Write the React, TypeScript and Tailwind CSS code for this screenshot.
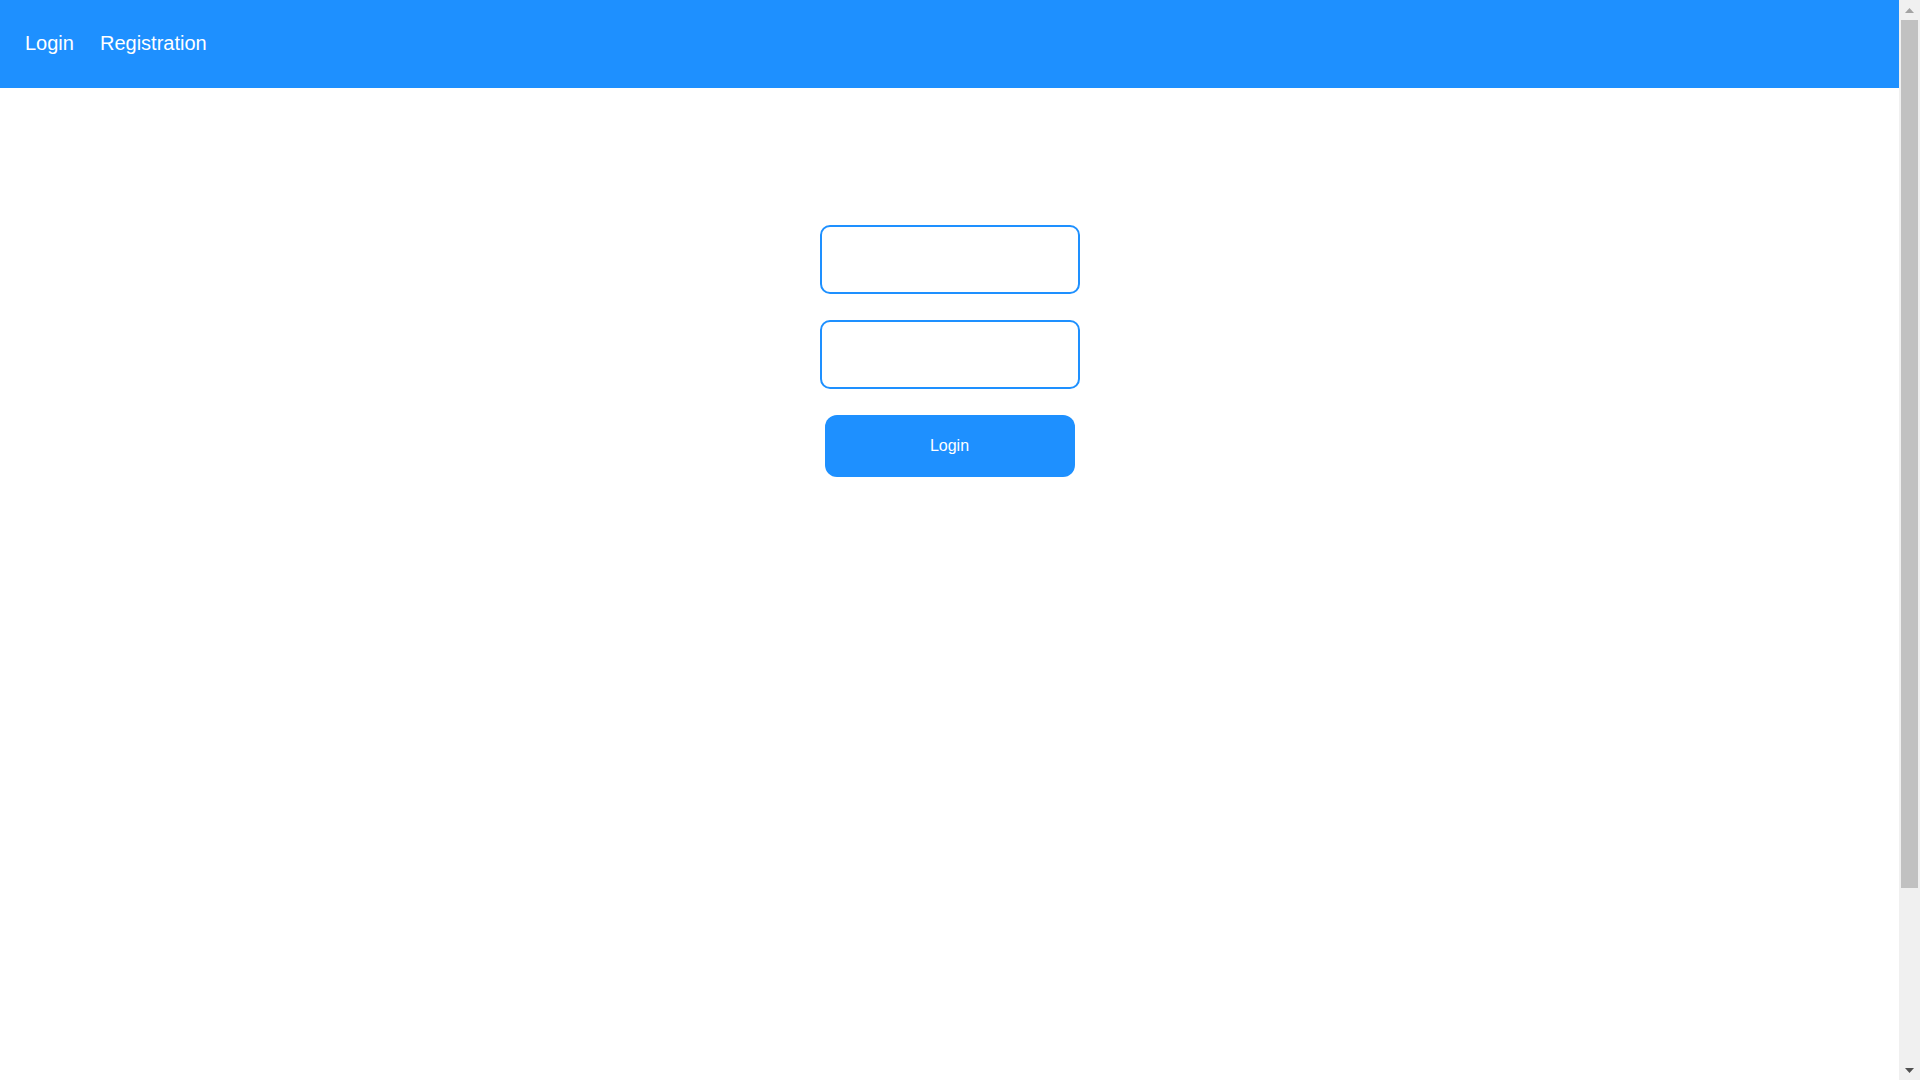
import React, { useState } from 'react';

// fake classic scrollbar on the right edge, as in the reference capture
function ScrollBar() {
  return (
    <div className="w-[21px] shrink-0 bg-[#f0f0f0] flex flex-col">
      <div className="h-[20px] flex items-center justify-center">
        <svg width="9" height="5" viewBox="0 0 9 5">
          <path d="M4.5 0L9 5H0z" fill="#a3a3a3" />
        </svg>
      </div>
      <div className="h-[868px] mx-[2px] bg-[#c1c1c1]" />
      <div className="flex-1" />
      <div className="h-[20px] flex items-center justify-center">
        <svg width="9" height="5" viewBox="0 0 9 5">
          <path d="M0 0H9L4.5 5z" fill="#505050" />
        </svg>
      </div>
    </div>
  );
}

export default function App() {
  const [username, setUsername] = useState('');
  const [password, setPassword] = useState('');

  return (
    <div className="h-screen flex overflow-hidden bg-white font-['Liberation_Sans',Arial,sans-serif]">
      <div className="flex-1">
        {/* Top nav */}
        <nav className="h-[88px] bg-[#1e90ff] flex items-center pl-[25px] pb-[2px] gap-[26px] text-white text-[20px]">
          <a href="#" className="no-underline">Login</a>
          <a href="#" className="no-underline">Registration</a>
        </nav>

        {/* Login form */}
        <form
          onSubmit={(e) => e.preventDefault()}
          className="flex flex-col items-center pt-[137px] gap-[26px]"
        >
          <input
            type="text"
            value={username}
            onChange={(e) => setUsername(e.target.value)}
            className="w-[260px] h-[69px] border-2 border-[#1e90ff] rounded-[10px] px-3 text-[16px] outline-none"
          />
          <input
            type="password"
            value={password}
            onChange={(e) => setPassword(e.target.value)}
            className="w-[260px] h-[69px] border-2 border-[#1e90ff] rounded-[10px] px-3 text-[16px] outline-none"
          />
          <button
            type="submit"
            className="w-[250px] h-[62px] bg-[#1e90ff] rounded-[12px] text-white text-[16px]"
          >
            Login
          </button>
        </form>
      </div>
      <ScrollBar />
    </div>
  );
}
